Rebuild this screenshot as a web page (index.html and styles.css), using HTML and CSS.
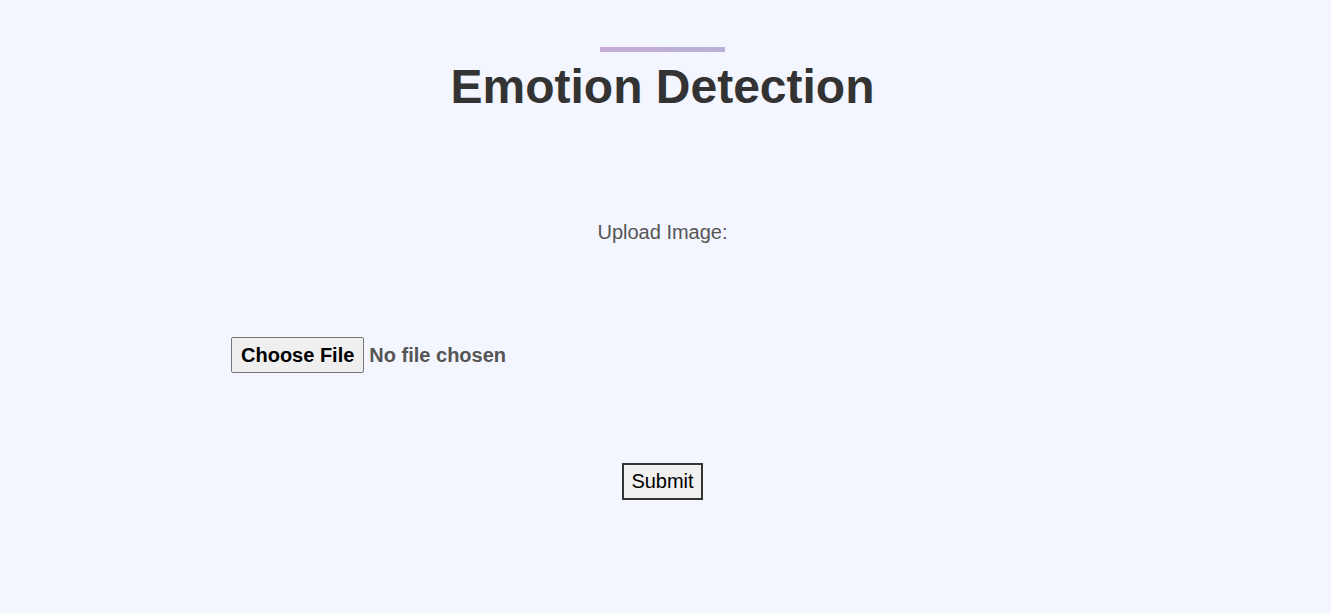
FILE: index.html
```html
<!DOCTYPE html>
<html>
<head>
<meta charset="utf-8">
<link rel="stylesheet" href="styles.css">
<title>Emotion Detection</title>
</head>
<body>
<div class="container">
  <div class="bar"></div>
  <h1 class="title">Emotion Detection</h1>
  <form class="form">
    <label class="label" for="img">Upload Image:</label>
    <div class="file-row"><input class="file" id="img" type="file"></div>
    <div class="submit-row"><button class="submit" type="button">Submit</button></div>
  </form>
</div>
</body>
</html>
```
FILE: styles.css
```css
html, body {
  margin: 0;
  padding: 0;
  background: #f3f6ff;
  font-family: "Liberation Sans", Arial, sans-serif;
}
.container {
  width: 863px;
  margin-left: 231px;
  padding-top: 47px;
  display: flex;
  flex-direction: column;
  align-items: center;
}
.bar {
  width: 125px;
  height: 5px;
  background: linear-gradient(90deg, #c5acd4, #b8b0d8);
}
.title {
  margin: 0;
  font-size: 48px;
  font-weight: bold;
  color: #333;
  line-height: 70px;
}
.form {
  width: 100%;
  display: flex;
  flex-direction: column;
  align-items: center;
  padding-top: 95px;
}
.label {
  font-size: 20px;
  color: #555;
  line-height: 30px;
}
.file-row {
  align-self: stretch;
  padding-top: 90px;
}
.file {
  font-family: "Liberation Sans", Arial, sans-serif;
  font-size: 20px;
  font-weight: bold;
  color: #555;
}
.file::file-selector-button {
  font-family: inherit;
  font-size: 20px;
  font-weight: bold;
  color: #000;
  background: #efefef;
  border: 1px solid #767676;
  border-radius: 2px;
  padding: 6px 9px 5px;
  margin-right: 5px;
}
.submit-row {
  padding-top: 90px;
}
.submit {
  font-family: "Liberation Sans", Arial, sans-serif;
  font-size: 20px;
  color: #000;
  background: #f0f0f0;
  border: 2px solid #333;
  padding: 5px 7px;
}
```
